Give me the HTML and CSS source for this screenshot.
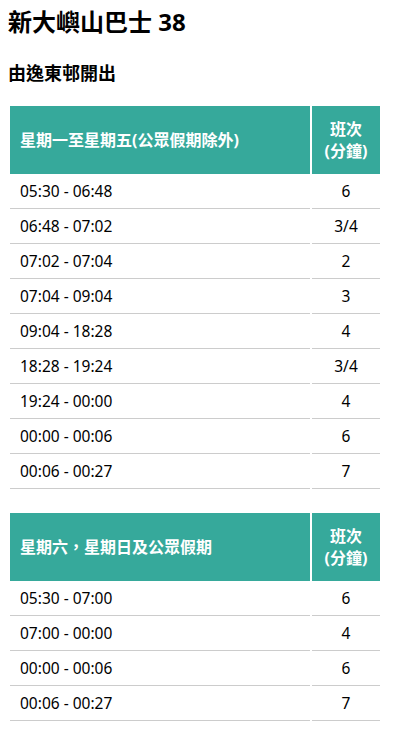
FILE: index.html
```html
<!DOCTYPE html>
<html lang="zh-HK">
<head>
  <meta charset="UTF-8" />
  <meta name="viewport" content="width=device-width, initial-scale=1.0"/>
  <title>新大嶼山巴士 38</title>
  <link rel="stylesheet" href="styles.css">
</head>
<body>

  <h1>新大嶼山巴士 38</h1>
  <h3>由逸東邨開出</h3>

  <table class="timetable">
    <thead>
      <tr>
        <th class="period">星期一至星期五(公眾假期除外)</th>
        <th class="freq">班次<br>(分鐘)</th>
      </tr>
    </thead>
    <tbody>
      <tr><td>05:30 - 06:48</td><td class="num">6</td></tr>
      <tr><td>06:48 - 07:02</td><td class="num">3/4</td></tr>
      <tr><td>07:02 - 07:04</td><td class="num">2</td></tr>
      <tr><td>07:04 - 09:04</td><td class="num">3</td></tr>
      <tr><td>09:04 - 18:28</td><td class="num">4</td></tr>
      <tr><td>18:28 - 19:24</td><td class="num">3/4</td></tr>
      <tr><td>19:24 - 00:00</td><td class="num">4</td></tr>
      <tr><td>00:00 - 00:06</td><td class="num">6</td></tr>
      <tr><td>00:06 - 00:27</td><td class="num">7</td></tr>
    </tbody>
  </table>

  <table class="timetable">
    <thead>
      <tr>
        <th class="period">星期六，星期日及公眾假期</th>
        <th class="freq">班次<br>(分鐘)</th>
      </tr>
    </thead>
    <tbody>
      <tr><td>05:30 - 07:00</td><td class="num">6</td></tr>
      <tr><td>07:00 - 00:00</td><td class="num">4</td></tr>
      <tr><td>00:00 - 00:06</td><td class="num">6</td></tr>
      <tr><td>00:06 - 00:27</td><td class="num">7</td></tr>
    </tbody>
  </table>

</body>
</html>
```

FILE: styles.css
```css
body {
  margin: 8px;
  font-family: "Noto Sans", "Noto Sans CJK TC", sans-serif;
  color: #000;
  background: #fff;
}

h1 {
  font-size: 24px;
  line-height: 28px;
  margin: 0;
}

h3 {
  font-size: 18px;
  line-height: 24px;
  margin: 25px 0 21px;
}

.timetable {
  border-collapse: separate;
  border-spacing: 2px 0;
  width: 374px;
  margin-bottom: 24px;
  font-size: 15.5px;
}

.timetable th {
  background: #36a99b;
  color: #fff;
  font-weight: bold;
  font-size: 16px;
  height: 68px;
  padding: 0 10px;
  line-height: 22px;
}

.timetable th.period {
  text-align: left;
  width: 280px;
}

.timetable th.freq {
  text-align: center;
}

.timetable td {
  height: 34px;
  padding: 0 10px;
  border-bottom: 1px solid #ccc;
  line-height: 20px;
}

.timetable td.num {
  text-align: center;
}
```
